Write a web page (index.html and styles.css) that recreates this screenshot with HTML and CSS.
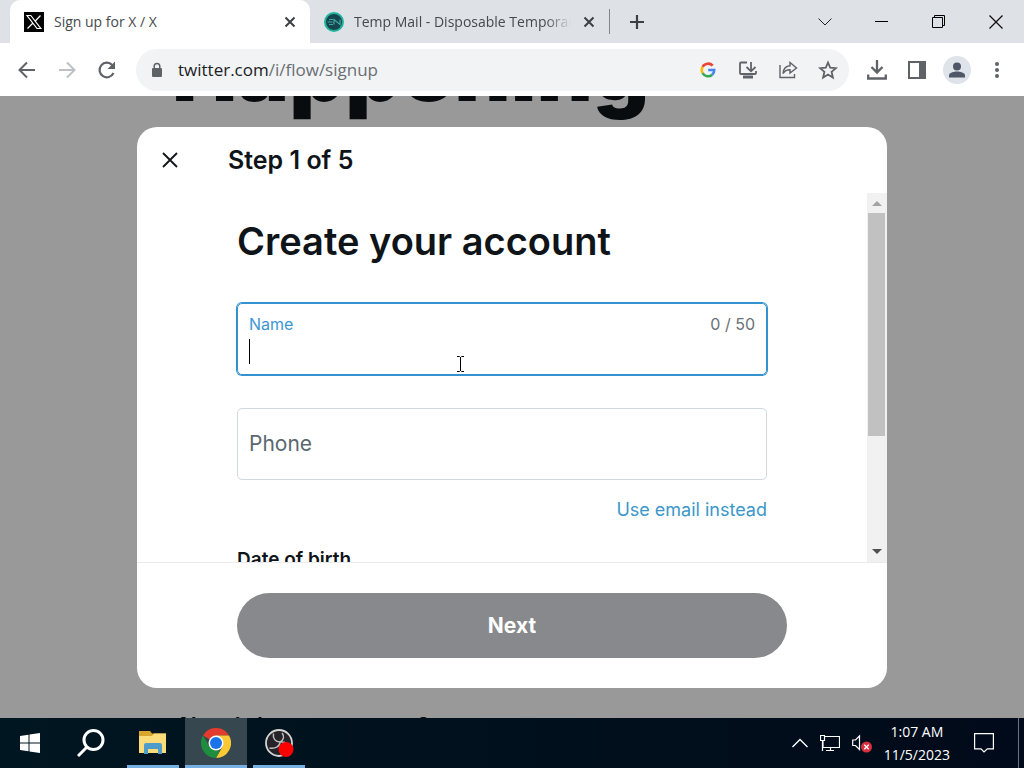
FILE: index.html
```html
<!DOCTYPE html>
<html lang="en">
<head>
    <meta charset="UTF-8">
    <meta name="viewport" content="width=device-width, initial-scale=1.0">
    <title>Sign up for X / X</title>
    <link rel="stylesheet" href="styles.css">
</head>
<body>
    <header class="browser">
        <div class="tab-strip">
            <div class="tab active">
                <svg class="favicon" viewBox="0 0 20 20"><rect width="20" height="20" fill="#000"/><path d="M3 3.500h3.800l10 13H13zM16.500 3.500l-5.700 6M9 11l-5.500 5.500" fill="none" stroke="#fff" stroke-width="1.200"/></svg>
                <span class="tab-title">Sign up for X / X</span>
                <button class="tab-close" aria-label="Close tab"><svg width="12" height="12" viewBox="0 0 12 12"><path d="M1.500 1.500l9 9M10.500 1.500l-9 9" stroke="#3c4043" stroke-width="2"/></svg></button>
            </div>
            <div class="tab">
                <svg class="favicon" viewBox="0 0 20 20"><circle cx="10" cy="10" r="9" fill="#16454f" stroke="#1fb59b" stroke-width="2"/><path d="M5 7.500h4M3.500 10h5M5 12.500h4M10 12.500v-5l6 5v-5" fill="none" stroke="#3fa9a0" stroke-width="1.200"/></svg>
                <span class="tab-title faded">Temp Mail - Disposable Temporary</span>
                <button class="tab-close" aria-label="Close tab"><svg width="12" height="12" viewBox="0 0 12 12"><path d="M1.500 1.500l9 9M10.500 1.500l-9 9" stroke="#3c4043" stroke-width="2"/></svg></button>
            </div>
            <button class="new-tab" aria-label="New tab"><svg width="16" height="16" viewBox="0 0 16 16"><path d="M8 1v14M1 8h14" stroke="#3c4043" stroke-width="2.200"/></svg></button>
            <div class="window-controls">
                <button aria-label="Search tabs"><svg width="16" height="16" viewBox="0 0 16 16"><path d="M1.500 4.500L8 11l6.500-6.500" fill="none" stroke="#222"/></svg></button>
                <button aria-label="Minimize"><svg width="14" height="14" viewBox="0 0 14 14"><path d="M0 6.500h13" stroke="#000"/></svg></button>
                <button aria-label="Restore"><svg width="14" height="14" viewBox="0 0 14 14"><path d="M.5 2.500h10v10H.5zM2.500 2.500v-2h10v10h-2" fill="none" stroke="#000"/></svg></button>
                <button aria-label="Close"><svg width="14" height="14" viewBox="0 0 14 14"><path d="M.5.5l13 13M13.500.5l-13 13" stroke="#111" stroke-width="1.300"/></svg></button>
            </div>
        </div>
        <div class="toolbar">
            <button class="tool" aria-label="Back"><svg width="18" height="18" viewBox="0 0 18 18"><path d="M17 9H2M9 1.500L1.500 9 9 16.500" fill="none" stroke="#5f6368" stroke-width="2"/></svg></button>
            <button class="tool" aria-label="Forward"><svg width="18" height="18" viewBox="0 0 18 18"><path d="M1 9h15M9 1.500L16.500 9 9 16.500" fill="none" stroke="#bdc1c6" stroke-width="2"/></svg></button>
            <button class="tool" aria-label="Reload"><svg width="20" height="20" viewBox="0 0 20 20"><path d="M16.500 13A7.300 7.300 0 1 1 15.200 5" fill="none" stroke="#5f6368" stroke-width="2.200"/><path d="M18 1.500V9h-7.500z" fill="#5f6368"/></svg></button>
            <div class="omnibox">
                <svg class="lock" width="12" height="16" viewBox="0 0 12 16"><rect x="1" y="6" width="10" height="9" rx="1" fill="#5f6368"/><path d="M3.200 7V4.200a2.800 2.800 0 0 1 5.600 0V7" fill="none" stroke="#5f6368" stroke-width="1.500"/></svg>
                <span class="url">twitter.com<span class="url-path">/i/flow/signup</span></span>
                <button class="tool" aria-label="Search with Google"><svg width="16" height="16" viewBox="0 0 16 16" fill="none" stroke-width="2.600"><path d="M12.700 3.600A6.300 6.300 0 0 0 2.600 4.900" stroke="#ea4335"/><path d="M2.600 4.900a6.300 6.300 0 0 0 0 6.200" stroke="#fbbc05"/><path d="M2.600 11.100a6.300 6.300 0 0 0 9.600 1.600" stroke="#34a853"/><path d="M12.200 12.700A6 6 0 0 0 14.200 8H8.200" stroke="#4285f4"/></svg></button>
                <button class="tool" aria-label="Install"><svg width="20" height="20" viewBox="0 0 20 20" fill="none" stroke="#5f6368" stroke-width="1.800"><path d="M9 2.500H3a1 1 0 0 0-1 1V13a1 1 0 0 0 1 1h14a1 1 0 0 0 1-1v-2M13 2v9M8.500 7L13 11.300 17.500 7"/><path d="M5 17h10" stroke-width="3"/></svg></button>
                <button class="tool" aria-label="Share"><svg width="20" height="20" viewBox="0 0 20 20" fill="none" stroke="#5f6368" stroke-width="1.400"><path d="M2 5v12.500h14.500V14"/><path d="M5 13.500C5.500 8.500 8 6 12 5.800V2.500L18.500 8 12 13V9.700C9 9.600 7 10.500 5 13.500z"/></svg></button>
                <button class="tool" aria-label="Bookmark"><svg width="20" height="20" viewBox="0 0 20 20"><path d="M10 2.500l2.200 5.200 5.700.5-4.300 3.700 1.300 5.600-4.900-3-4.900 3 1.300-5.600L2.100 8.200l5.700-.5z" fill="none" stroke="#5f6368" stroke-width="1.800"/></svg></button>
            </div>
            <button class="tool" aria-label="Downloads"><svg width="20" height="20" viewBox="0 0 20 20" fill="none" stroke="#5f6368" stroke-width="2.300"><path d="M10 0v12M4.500 7l5.500 5.500L15.500 7M1.200 14.500v4h17.600v-4"/></svg></button>
            <button class="tool" aria-label="Side panel"><svg width="20" height="20" viewBox="0 0 20 20"><path d="M1 1h18v18H1zM3 3v14h9V3z" fill="#5f6368" fill-rule="evenodd"/></svg></button>
            <button class="tool" aria-label="Profile"><svg width="28" height="28" viewBox="0 0 28 28"><circle cx="14" cy="14" r="14" fill="#dfe3ea"/><circle cx="14" cy="10.500" r="4" fill="#4d5766"/><path d="M6 21.500v-2c0-3 5-4 8-4s8 1 8 4v2z" fill="#4d5766"/></svg></button>
            <button class="tool" aria-label="Menu"><svg width="4" height="18" viewBox="0 0 4 18" fill="#5f6368"><circle cx="2" cy="3" r="2"/><circle cx="2" cy="9" r="2"/><circle cx="2" cy="15" r="2"/></svg></button>
        </div>
    </header>

    <main class="page">
        <div class="landing">
            <h2 class="landing-title">Happening</h2>
            <p class="landing-signin">Already have an account?</p>
        </div>
        <div class="overlay">
            <form class="modal">
                <div class="modal-header">
                    <button type="button" class="modal-close" aria-label="Close"><svg width="16" height="16" viewBox="0 0 16 16"><path d="M1 1l14 14M15 1L1 15" stroke="#0f1419" stroke-width="1.800"/></svg></button>
                    <h2>Step 1 of 5</h2>
                </div>
                <div class="modal-body">
                    <div class="modal-content">
                        <h1>Create your account</h1>
                        <div class="field focused">
                            <div class="field-top">
                                <label for="name">Name</label>
                                <span class="counter">0 / 50</span>
                            </div>
                            <input type="text" id="name" maxlength="50">
                            <span class="caret"></span>
                            <svg class="pointer" width="9" height="16" viewBox="0 0 9 16"><path d="M1 .5h2.500l1 1 1-1H8M4.500 1v14M1 15.500h2.500l1-1 1 1H8" fill="none" stroke="#000"/></svg>
                        </div>
                        <div class="field">
                            <input type="tel" id="phone" placeholder="Phone" aria-label="Phone">
                        </div>
                        <a class="switch-link" href="#">Use email instead</a>
                        <h3>Date of birth</h3>
                    </div>
                    <div class="scrollbar">
                        <svg width="20" height="20" viewBox="0 0 20 20"><path d="M5 13l5-5 5 5z" fill="#a3a3a3"/></svg>
                        <div class="scroll-track"><div class="scroll-thumb"></div></div>
                        <svg width="20" height="20" viewBox="0 0 20 20"><path d="M5 7h10l-5 5z" fill="#505050"/></svg>
                    </div>
                </div>
                <div class="modal-footer">
                    <button type="button" class="next">Next</button>
                </div>
            </form>
        </div>
    </main>

    <footer class="taskbar">
        <button class="task" aria-label="Start"><svg width="20" height="20" viewBox="0 0 20 20" fill="#fff"><path d="M0 3l8.500-1.200v7.700H0zM9.500 1.600L20 0v9.500H9.500zM0 10.500h8.500v7.700L0 17zM9.500 10.500H20V20L9.500 18.400z"/></svg></button>
        <button class="task" aria-label="Search"><svg width="28" height="28" viewBox="0 0 28 28" fill="none" stroke="#fff" stroke-width="3"><circle cx="16.500" cy="11" r="9.500"/><path d="M10 18l-9 9"/></svg></button>
        <button class="task open" aria-label="File Explorer"><svg width="28" height="24" viewBox="0 0 28 24"><path d="M0 0h11l2 2.500h14V22H0z" fill="#d9a62e"/><path d="M0 5h13l2-2.500h12V22H0z" fill="#fbdc7b"/><path d="M5 23V14q0-2 2-2h14q2 0 2 2v9h-4v-5h-10v5z" fill="#4d9cc9"/></svg></button>
        <button class="task open current" aria-label="Chrome"><svg width="30" height="30" viewBox="0 0 30 30"><path d="M15 15L2 7.500A15 15 0 0 1 28 7.500H15z" fill="#e33b2e"/><path d="M15 7.500h13A15 15 0 0 1 15 30l6.500-11.200z" fill="#fcc934"/><path d="M2 7.500l6.500 11.200L15 22.500l4-.2L15 30A15 15 0 0 1 2 7.500z" fill="#1e8e3e"/><circle cx="15" cy="15" r="7.500" fill="#fff"/><circle cx="15" cy="15" r="6" fill="#1a73e8"/></svg></button>
        <button class="task open" aria-label="OBS Studio"><svg width="30" height="30" viewBox="0 0 30 30"><circle cx="15" cy="15" r="13" fill="#252327" stroke="#d4d4d4" stroke-width="1.800"/><path d="M9.500 5.500c-1 5 2 8.500 6.500 8.500 4-.5 7 1 8.500 4M16 14c0 4-4 7-10.500 6M16 14c4-2 4.500-6 2-9" fill="none" stroke="#bbb" stroke-width="1.500"/><circle cx="22" cy="21.500" r="7.500" fill="#f00"/></svg></button>
        <div class="tray">
            <svg width="16" height="10" viewBox="0 0 16 10"><path d="M.5 9L8 1.500 15.500 9" fill="none" stroke="#fff" stroke-width="1.400"/></svg>
            <svg width="20" height="17" viewBox="0 0 20 17" fill="none" stroke="#fff" stroke-width="1.200"><path d="M5 1.500h14.500v11H3V6M.5.5h4v5h-4zM2.500 6v10M6 15.500h8M10.500 13v2.500"/></svg>
            <svg width="20" height="20" viewBox="0 0 20 20"><path d="M.7 7h2.800L7.500 3v13.500l-4-4H.7z" fill="none" stroke="#fff" stroke-width="1.200"/><circle cx="14.500" cy="14" r="5.500" fill="#d93040"/><path d="M12.300 11.800l4.400 4.400M16.700 11.800l-4.400 4.400" stroke="#fff" stroke-width="1.300"/></svg>
            <div class="clock"><span>1:07 AM</span><span>11/5/2023</span></div>
            <svg class="notify" width="20" height="20" viewBox="0 0 20 20"><path d="M.6.6h18.800v15.300h-6L10 19l-3-3.100H.6z" fill="none" stroke="#fff" stroke-width="1.200"/></svg>
            <div class="show-desktop"></div>
        </div>
    </footer>
</body>
</html>
```

FILE: styles.css
```css
* {
    box-sizing: border-box;
}
body {
    display: flex;
    flex-direction: column;
    height: 100vh;
    margin: 0;
    overflow: hidden;
    font-family: Inter, "Liberation Sans", sans-serif;
    color: #0f1419;
}
h1, h2, h3, p {
    margin: 0;
}
button {
    display: flex;
    align-items: center;
    justify-content: center;
    padding: 0;
    border: 0;
    background: none;
    font-family: inherit;
    cursor: pointer;
}
svg {
    flex: none;
    display: block;
}

/* browser chrome */
.browser {
    font-family: "Open Sans", "Noto Sans", sans-serif;
}
.tab-strip {
    display: flex;
    align-items: center;
    height: 43px;
    padding-left: 10px;
    background-color: #dee1e6;
}
.tab {
    display: flex;
    align-items: center;
    width: 299px;
    height: 43px;
    padding: 0 14px;
    border-radius: 10px 10px 0 0;
    font-size: 14px;
    line-height: 18px;
    color: #45494d;
}
.tab.active {
    width: 300px;
    background-color: #fff;
}
.favicon {
    width: 20px;
    height: 20px;
    margin-right: 10px;
}
.tab-title {
    flex: 1;
    overflow: hidden;
    white-space: nowrap;
}
.tab-title.faded {
    -webkit-mask-image: linear-gradient(to right, #000 88%, transparent);
    mask-image: linear-gradient(to right, #000 88%, transparent);
}
.tab-close {
    width: 12px;
    height: 20px;
    margin-left: 12px;
}
.new-tab {
    width: 54px;
    height: 25px;
    border-left: 1px solid #80868b;
}
.window-controls {
    display: flex;
    height: 38px;
    margin-left: auto;
}
.window-controls button {
    width: 57px;
}
.toolbar {
    display: flex;
    align-items: center;
    height: 53px;
    padding: 0 7px;
    background-color: #fff;
}
.tool {
    width: 40px;
    height: 40px;
}
.omnibox {
    display: flex;
    flex: 1;
    align-items: center;
    height: 42px;
    margin: 0 8px 0 9px;
    padding: 0 1px 0 15px;
    border-radius: 21px;
    background-color: #f1f3f4;
}
.url {
    flex: 1;
    margin-left: 15px;
    font-size: 17px;
    color: #202124;
}
.url-path {
    color: #6a6e73;
}

/* landing page under the dialog */
.page {
    position: relative;
    flex: 1;
    min-height: 0;
    overflow: hidden;
    background-color: #999;
}
.landing {
    display: flex;
    flex-direction: column;
    justify-content: space-between;
    height: 100%;
    padding-left: 172px;
    color: #090c0f;
}
.landing-title {
    margin-top: -70px;
    font-size: 87px;
    font-weight: 900;
    line-height: 87px;
}
.landing-signin {
    margin-bottom: -20px;
    padding-left: 4px;
    font-size: 20px;
    font-weight: 700;
    line-height: 26px;
}
.overlay {
    position: absolute;
    inset: 0;
    display: flex;
    align-items: center;
    justify-content: center;
}

/* sign up dialog */
.modal {
    display: flex;
    flex-direction: column;
    width: 750px;
    max-width: 100%;
    border-radius: 20px;
    overflow: hidden;
    background-color: #fff;
}
.modal-header {
    display: flex;
    align-items: center;
    height: 66px;
    padding-left: 13px;
}
.modal-header h2 {
    margin-left: 38px;
    font-size: 25px;
    font-weight: 600;
}
.modal-close {
    width: 40px;
    height: 40px;
}
.modal-body {
    display: flex;
    height: 369px;
    overflow: hidden;
}
.modal-content {
    flex: 1;
    padding: 24px 100px 0;
}
.modal-content h1 {
    margin-bottom: 38px;
    font-size: 38px;
    font-weight: 600;
    line-height: 48px;
}
.field {
    position: relative;
    display: flex;
    flex-direction: column;
    height: 72px;
    margin-bottom: 33px;
    padding: 0 11px;
    border: 1px solid #cfd9de;
    border-radius: 5px;
}
.field.focused {
    border-color: #3492d1;
    box-shadow: 0 0 0 1px #3492d1;
}
.field-top {
    display: flex;
    justify-content: space-between;
    padding-top: 10px;
    font-size: 16px;
    line-height: 20px;
    color: #6a7176;
}
.field.focused label {
    color: #3b97d3;
}
.field input {
    flex: 1;
    width: 100%;
    min-height: 0;
    padding: 0;
    border: 0;
    outline: 0;
    background: none;
    font-family: inherit;
    font-size: 21px;
    color: #0f1419;
}
.field input::placeholder {
    color: #5b6770;
}
.caret {
    position: absolute;
    left: 11px;
    bottom: 10px;
    width: 1px;
    height: 25px;
    background-color: #000;
}
.pointer {
    position: absolute;
    left: 218px;
    top: 52px;
}
.switch-link {
    display: block;
    margin: -16px 0 24px;
    font-size: 18px;
    line-height: 26px;
    text-align: right;
    text-decoration: none;
    color: #3b97c9;
}
.modal-content h3 {
    font-size: 19px;
    font-weight: 600;
    line-height: 26px;
}
.scrollbar {
    display: flex;
    flex-direction: column;
    width: 20px;
    background-color: #f1f1f1;
}
.scroll-track {
    flex: 1;
    padding: 0 2px 0 1px;
}
.scroll-thumb {
    height: 68%;
    background-color: #c1c1c1;
}
.modal-footer {
    padding: 30px 100px;
    border-top: 1px solid #e9ebec;
}
.next {
    width: 100%;
    height: 65px;
    border-radius: 33px;
    background-color: #87898c;
    font-size: 21px;
    font-weight: 700;
    color: #fff;
}

/* windows taskbar */
.taskbar {
    display: flex;
    gap: 1px;
    height: 50px;
    background: linear-gradient(to right, #001620, #010a1a);
}
.task {
    position: relative;
    width: 60px;
    height: 50px;
}
.task.open {
    width: 62px;
}
.task.current {
    background-color: #36474f;
}
.task.open::after {
    content: "";
    position: absolute;
    left: 5px;
    right: 5px;
    bottom: 0;
    height: 3px;
    background-color: #76b0e2;
}
.task.current::after {
    left: 0;
    right: 0;
}
.tray {
    display: flex;
    align-items: center;
    gap: 12px;
    margin-left: auto;
    color: #fff;
}
.clock {
    display: flex;
    flex-direction: column;
    align-items: center;
    font-family: "Open Sans", "Noto Sans", sans-serif;
    font-size: 14px;
    line-height: 23px;
}
.notify {
    margin: 0 12px;
}
.show-desktop {
    width: 6px;
    height: 50px;
    border-left: 1px solid #6b7280;
}
```
